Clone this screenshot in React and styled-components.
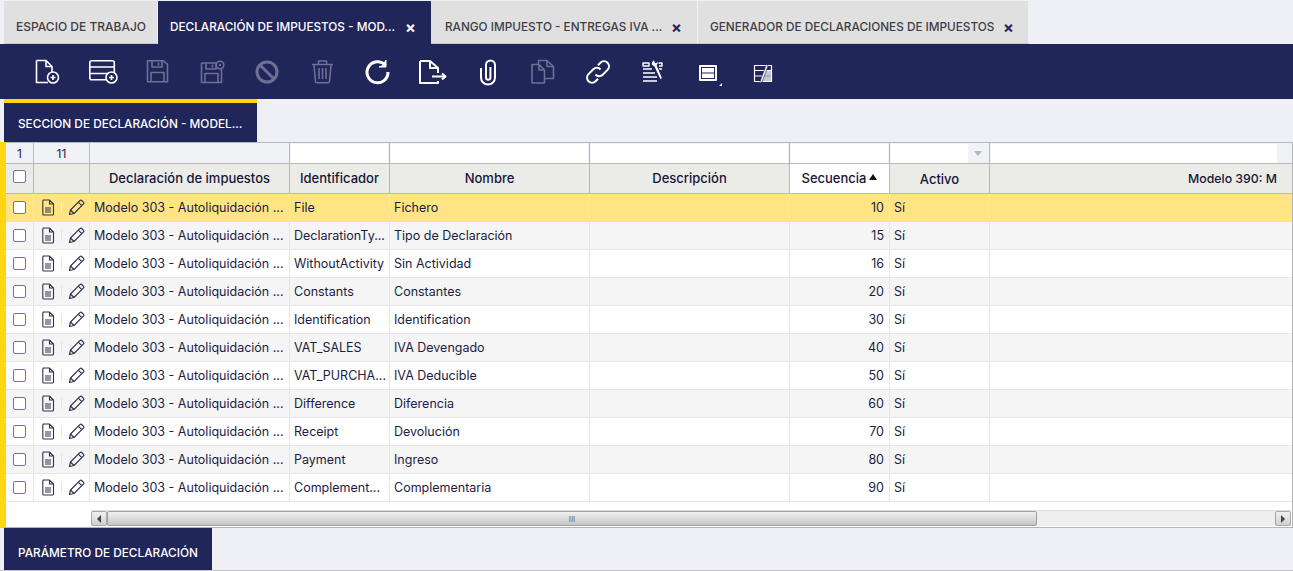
import styled, { createGlobalStyle } from "styled-components";

const NAVY = "#20255a";
const FONT = `Inter, "Liberation Sans", sans-serif`;
const COLUMNS = "28px 56px 200px 100px 200px 200px 100px 100px 1fr";

const GlobalStyle = createGlobalStyle`
  html, body {
    margin: 0;
    padding: 0;
    height: 100%;
    overflow: hidden;
    background: #eff0f5;
  }
  * { box-sizing: border-box; }
`;

const Page = styled.div`
  width: 1293px;
  height: 571px;
  overflow: hidden;
  display: flex;
  flex-direction: column;
  font-family: ${FONT};
  border-bottom: 1px solid #c4c4c4;
`;

const TabBar = styled.div`
  display: flex;
  height: 44px;
  padding: 1px 0 0 4px;
`;

const Tab = styled.div`
  width: ${(p) => p.$width}px;
  display: flex;
  align-items: center;
  padding: 9px 0 0 ${(p) => p.$pad || 12}px;
  font-size: ${(p) => p.$size || 11.75}px;
  font-weight: 500;
  white-space: nowrap;
  background: ${(p) => (p.$active ? NAVY : "#e0e0e0")};
  color: ${(p) => (p.$active ? "#fff" : "#3e3e48")};
  border-bottom: 1px solid ${(p) => (p.$active ? NAVY : "#c8c8cc")};
  border-right: 1px solid ${(p) => (p.$active ? NAVY : "#eff0f5")};
`;

const TabLabel = styled.span`
  width: ${(p) => p.$width}px;
  flex-shrink: 0;
`;

const TabClose = styled.span`
  font-size: 16px;
  font-weight: 700;
  line-height: 1;
  color: ${(p) => (p.$active ? "#fff" : "#2c1f5e")};
`;

const Toolbar = styled.div`
  display: flex;
  height: 55px;
  padding: 12px 0 0 19px;
  background: ${NAVY};
`;

const ToolButton = styled.button`
  width: 55px;
  height: 32px;
  padding: 0 0 0 12px;
  border: 0;
  background: none;
  display: flex;
  color: ${(p) => (p.disabled ? "#6d7093" : "#fff")};
`;

const SectionTab = styled.div`
  width: ${(p) => p.$width}px;
  height: ${(p) => p.$height}px;
  margin-left: 4px;
  flex-shrink: 0;
  display: flex;
  align-items: center;
  padding: ${(p) => p.$top}px 0 0 14px;
  background: ${NAVY};
  color: #fff;
  font-size: 11.8px;
  font-weight: 500;
  white-space: nowrap;
  border-top: ${(p) => (p.$accent ? "4px solid #ffd60f" : "0")};
`;

const Panel = styled.div`
  height: 386px;
  flex-shrink: 0;
  border-left: 6px solid #ffd60f;
  border-right: 1px solid #b4b4b4;
  border-bottom: 1px solid #b4b4b4;
  background: #fff;
  display: flex;
  flex-direction: column;
`;

const Row = styled.div`
  display: grid;
  grid-template-columns: ${COLUMNS};
`;

const FilterRow = styled(Row)`
  height: 22px;
  background: #f1f2f5;
  border-top: 1px solid #b9b9b9;
  border-bottom: 1px solid #b9b9b9;
`;

const FilterCell = styled.div`
  display: flex;
  justify-content: center;
  align-items: center;
  padding: ${(p) => (p.$input ? "1px 1px 0 1px" : "1px 0 0 0")};
  border-right: 1px solid #b9b9b9;
  font-size: 12px;
  color: #25254a;
`;

const FilterInput = styled.div`
  flex: 1;
  height: 100%;
  background: #fff;
`;

const OpenFilter = styled(FilterCell)`
  justify-content: flex-start;
  padding: 1px 0 0 1px;
`;

const FilterSelect = styled.div`
  width: 77px;
  height: 100%;
  background: #fff;
`;

const FilterCaret = styled.span`
  margin-left: 6px;
  width: 0;
  height: 0;
  border-left: 4px solid transparent;
  border-right: 4px solid transparent;
  border-top: 5px solid #b8b8b8;
`;

const LastFilter = styled(FilterCell)`
  justify-content: flex-start;
  padding: 1px 15px 0 1px;
  border-right: 0;
`;

const HeaderRow = styled(Row)`
  height: 30px;
  background: #ebece8;
  border-bottom: 1px solid #b9b9b9;
`;

const HeaderCell = styled.div`
  display: flex;
  align-items: center;
  justify-content: ${(p) => p.$justify || "center"};
  padding: ${(p) => (p.$last ? "0 15px 1px 0" : "0 0 1px 0")};
  padding-top: ${(p) => (p.$low ? "2px" : "0")};
  background: ${(p) => (p.$sorted ? "#fff" : "transparent")};
  border-right: ${(p) => (p.$last ? "0" : "1px solid #b9b9b9")};
  font-size: ${(p) => (p.$last ? 12.3 : 13)}px;
  font-weight: 500;
  color: #16163a;
  white-space: nowrap;
`;

const SortMark = styled.span`
  margin: 0 0 3px 3px;
  width: 0;
  height: 0;
  border-left: 4px solid transparent;
  border-right: 4px solid transparent;
  border-bottom: 6px solid #111;
`;

const DataRow = styled(Row)`
  height: 28px;
  border-bottom: 1px solid ${(p) => (p.$selected ? "#ffe483" : "#e6e6e6")};
  background: ${(p) => (p.$selected ? "#ffe483" : p.$odd ? "#f5f5f5" : "#fff")};
`;

const Cell = styled.div`
  display: flex;
  align-items: center;
  justify-content: ${(p) => (p.$right ? "flex-end" : "flex-start")};
  padding: 0 4px;
  padding-right: ${(p) => (p.$right ? "5px" : "4px")};
  overflow: hidden;
  white-space: nowrap;
  border-right: ${(p) => (p.$last ? "0" : "1px solid #e6e6e6")};
  font-size: 12.5px;
  color: #1c1c44;
`;

const CheckCell = styled(Cell)`
  justify-content: center;
  padding: 0;
`;

const Check = styled.span`
  width: 13px;
  height: 13px;
  background: #fff;
  border: 1px solid #8167ad;
  border-radius: 2px;
`;

const HeaderCheck = styled(Check)`
  margin-bottom: 3px;
`;

const ActionCell = styled(Cell)`
  padding: 0 0 0 7px;
`;

const ActionDivider = styled.span`
  width: 1px;
  height: 11px;
  margin: 0 6px;
  background: ${(p) => (p.$selected ? "#fff3c4" : "#e4e4e4")};
`;

const Filler = styled.div`
  flex: 1;
`;

const ScrollBar = styled.div`
  height: 16px;
  margin: 0 1px 1px 85px;
  display: flex;
  background: #eeeeee;
  border-top: 1px solid #dedede;
`;

const ScrollEnd = styled.div`
  width: 16px;
  height: 15px;
  display: flex;
  align-items: center;
  justify-content: center;
  background: linear-gradient(#f2f2f2, #d0d0d0);
  border: 1px solid #a8a8a8;
  border-radius: 2px;
`;

const ScrollThumb = styled.div`
  width: 930px;
  height: 15px;
  display: flex;
  align-items: center;
  justify-content: center;
  background: linear-gradient(#f0f0f0, #c6c6c6);
  border: 1px solid #a0a0a0;
  border-radius: 2px;
  color: #666;
  font-size: 8px;
`;

const ScrollTrack = styled.div`
  flex: 1;
`;

const Arrow = styled.span`
  width: 0;
  height: 0;
  border-top: 4px solid transparent;
  border-bottom: 4px solid transparent;
  border-left: ${(p) => (p.$dir === "right" ? "4px solid #444" : "0")};
  border-right: ${(p) => (p.$dir === "left" ? "4px solid #444" : "0")};
`;

const Icon = ({ children, width = 2 }) => (
  <svg width="32" height="32" viewBox="0 0 32 32" fill="none" stroke="currentColor" strokeWidth={width} strokeLinejoin="round">
    {children}
  </svg>
);

const PlusBadge = ({ x, y }) => (
  <g>
    <circle cx={x} cy={y} r="5.5" fill={NAVY} />
    <path d={`M${x - 2.5} ${y}h5M${x} ${y - 2.5}v5`} />
  </g>
);

const NewDocIcon = () => (
  <Icon width={1.6}>
    <path d="M5.5 4.5H15l6 6v7M15 4.5v6h6M17 26.5H5.5v-22" />
    <PlusBadge x={22} y={21.5} />
  </Icon>
);

const NewRowIcon = () => (
  <Icon width={1.6}>
    <rect x="3.8" y="4.8" width="24.5" height="19" rx="2" />
    <path d="M4 11h24M4 17.5h24" />
    <PlusBadge x={25.5} y={21.5} />
  </Icon>
);

const SaveIcon = () => (
  <Icon width={1.6}>
    <path d="M6.5 4.8h16l4 3.5v17.5h-20z" />
    <path d="M11 5v6h10V5M17.5 6.5v3M10 25.5v-9h13v9" />
  </Icon>
);

const SaveCloseIcon = () => (
  <Icon width={1.6}>
    <g transform="translate(-1 0)">
      <path d="M6.5 7h15M26.5 13v13.5h-20V7" />
      <path d="M11 7v6h10V7M17.5 8.5v3M10 26.5v-9h13v9" />
      <circle cx="25" cy="9" r="3.8" />
      <path d="M24 8l2 2M26 8l-2 2" strokeWidth="1" />
    </g>
  </Icon>
);

const CancelIcon = () => (
  <Icon width={3}>
    <circle cx="16" cy="16" r="10" />
    <path d="M9 9l14 14" />
  </Icon>
);

const TrashIcon = () => (
  <Icon width={1.6}>
    <path d="M6 8.5h21M12.5 8V5h8v3M8 9l1.5 16.5c.1.8.6 1.3 1.4 1.3h11.2c.8 0 1.3-.5 1.4-1.3L25 9" />
    <path d="M13 12v11M16.5 12v11M20 12v11" />
  </Icon>
);

const RefreshIcon = () => (
  <Icon width={3}>
    <path d="M24.5 9.5A10.5 10.5 0 1 0 27 16" />
    <path d="M25 4v7h-7l4-1.5z" fill="currentColor" strokeWidth="1" />
  </Icon>
);

const ExportIcon = () => (
  <Icon width={2}>
    <path d="M4 5h10l8 7v5M14 5v7h8M22 25v2H4V5" />
    <path d="M16 20.5h13M26 17.5l3.5 3-3.5 3" />
  </Icon>
);

const ClipIcon = () => (
  <Icon width={2}>
    <path d="M10 12v9.5a7 7 0 0 0 14 0V9a4.5 4.5 0 0 0-9 0v12.5a2.2 2.2 0 0 0 4.4 0V11" />
  </Icon>
);

const CopyIcon = () => (
  <Icon width={1.6}>
    <path d="M12.5 8V4.5H21l6.5 6v12h-9M21 4.5v6h6.500" />
    <path d="M6 8.5h7l5.500 5.500v13H6zM13 8.500V14h5.500" />
  </Icon>
);

const LinkIcon = () => (
  <Icon width={2}>
    <g transform="translate(1 0)">
      <path d="M13.5 18.5a5 5 0 0 0 7.2.2l4.8-4.8a5 5 0 0 0-7.100-7.100l-2.400 2.400" />
      <path d="M18.5 13.5a5 5 0 0 0-7.2-.2l-4.8 4.8a5 5 0 0 0 7.100 7.100l2.400-2.400" />
    </g>
  </Icon>
);

const FieldsIcon = () => (
  <Icon width={1.4}>
    <path d="M7 7h6v3H7zM7 13h9M7 17h12M7 21h14M7 25h14" />
    <path d="M20 7h6v3h-3M20 13h6" />
    <path d="M15.5 6c-.6 2.2.5 4 2.5 4.5l6 13 2.5-1.2-5.5-13.300c1.200-1 1.500-2.500 1-3.800l-2 1.600-1-.5-.3-2.200c-1.100-.2-2.300.5-3 1.900z" fill="currentColor" stroke={NAVY} strokeWidth="1" />
  </Icon>
);

const FormViewIcon = () => (
  <Icon width={2}>
    <rect x="9" y="10" width="16" height="14" />
    <rect x="11" y="12" width="12" height="4.5" fill="currentColor" stroke="none" />
    <rect x="11" y="17.5" width="12" height="4.5" fill="currentColor" stroke="none" />
    <path d="M31 27v3h-3z" fill="currentColor" stroke="none" />
  </Icon>
);

const GridViewIcon = () => (
  <Icon width={1.2}>
    <rect x="8.5" y="9.5" width="17" height="16" />
    <path d="M8.5 14.5h17M8.5 20h17" />
    <path d="M18 15h7v4.5h-8zM16 20.5h9V25h-10z" fill="#c8c8d0" stroke="none" />
    <path d="M20.5 8l-7 19 2.5-1 6-16z" fill="currentColor" stroke={NAVY} strokeWidth=".6" />
  </Icon>
);

const RowDocIcon = () => (
  <svg width="14" height="17" viewBox="0 0 14 17" fill="none" stroke="#33334d" strokeWidth="1.1">
    <path d="M1.8 1h6.700l4 4v10a1 1 0 0 1-1 1H2.800a1 1 0 0 1-1-1V2a1 1 0 0 1 1-1zM8.500 1v4h4" />
    <path d="M4 9h6M4 11h6M4 13h6" />
  </svg>
);

const RowEditIcon = () => (
  <svg width="17" height="17" viewBox="0 0 17 17" fill="none" stroke="#33334d" strokeWidth="1.2" strokeLinejoin="round">
    <path d="M1.5 15.5l1-4.500L11.800 1.700a1.500 1.500 0 0 1 2.100 0l1.400 1.400a1.500 1.500 0 0 1 0 2.100L6 14.500z" />
    <path d="M10.300 3.200l3.500 3.500M2.500 11l3.500 3.500" />
  </svg>
);

const tools = [
  { icon: NewDocIcon },
  { icon: NewRowIcon },
  { icon: SaveIcon, off: true },
  { icon: SaveCloseIcon, off: true },
  { icon: CancelIcon, off: true },
  { icon: TrashIcon, off: true },
  { icon: RefreshIcon },
  { icon: ExportIcon },
  { icon: ClipIcon },
  { icon: CopyIcon, off: true },
  { icon: LinkIcon },
  { icon: FieldsIcon },
  { icon: FormViewIcon },
  { icon: GridViewIcon },
];

const rows = [
  ["File", "Fichero", 10],
  ["DeclarationTy...", "Tipo de Declaración", 15],
  ["WithoutActivity", "Sin Actividad", 16],
  ["Constants", "Constantes", 20],
  ["Identification", "Identification", 30],
  ["VAT_SALES", "IVA Devengado", 40],
  ["VAT_PURCHA...", "IVA Deducible", 50],
  ["Difference", "Diferencia", 60],
  ["Receipt", "Devolución", 70],
  ["Payment", "Ingreso", 80],
  ["Complement...", "Complementaria", 90],
];

const App = () => {
  return (
    <Page>
      <GlobalStyle />
      <TabBar>
        <Tab $width={154} $size={12}>ESPACIO DE TRABAJO</Tab>
        <Tab $width={273} $active>
          <TabLabel $width={235}>DECLARACIÓN DE IMPUESTOS - MOD...</TabLabel>
          <TabClose $active>×</TabClose>
        </Tab>
        <Tab $width={267} $pad={14}>
          <TabLabel $width={226}>RANGO IMPUESTO - ENTREGAS IVA ...</TabLabel>
          <TabClose>×</TabClose>
        </Tab>
        <Tab $width={331}>
          <TabLabel $width={293}>GENERADOR DE DECLARACIONES DE IMPUESTOS</TabLabel>
          <TabClose>×</TabClose>
        </Tab>
      </TabBar>
      <Toolbar>
        {tools.map(({ icon: ToolIcon, off }, i) => (
          <ToolButton key={i} disabled={off}>
            <ToolIcon />
          </ToolButton>
        ))}
      </Toolbar>
      <SectionTab $width={253} $height={43} $top={3} $accent>
        SECCION DE DECLARACIÓN - MODEL...
      </SectionTab>
      <Panel>
        <FilterRow>
          <FilterCell>1</FilterCell>
          <FilterCell>11</FilterCell>
          <FilterCell />
          <FilterCell $input><FilterInput /></FilterCell>
          <FilterCell $input><FilterInput /></FilterCell>
          <FilterCell $input><FilterInput /></FilterCell>
          <FilterCell $input><FilterInput /></FilterCell>
          <OpenFilter>
            <FilterSelect />
            <FilterCaret />
          </OpenFilter>
          <LastFilter $input><FilterInput /></LastFilter>
        </FilterRow>
        <HeaderRow>
          <HeaderCell><HeaderCheck /></HeaderCell>
          <HeaderCell />
          <HeaderCell>Declaración de impuestos</HeaderCell>
          <HeaderCell>Identificador</HeaderCell>
          <HeaderCell>Nombre</HeaderCell>
          <HeaderCell>Descripción</HeaderCell>
          <HeaderCell $sorted>Secuencia<SortMark /></HeaderCell>
          <HeaderCell $low>Activo</HeaderCell>
          <HeaderCell $last $justify="flex-end">Modelo 390: M</HeaderCell>
        </HeaderRow>
        {rows.map(([key, name, seq], i) => (
          <DataRow key={key} $selected={i === 0} $odd={i % 2 === 1}>
            <CheckCell><Check /></CheckCell>
            <ActionCell>
              <RowDocIcon />
              <ActionDivider $selected={i === 0} />
              <RowEditIcon />
            </ActionCell>
            <Cell>Modelo 303 - Autoliquidación ...</Cell>
            <Cell>{key}</Cell>
            <Cell>{name}</Cell>
            <Cell />
            <Cell $right>{seq}</Cell>
            <Cell>Sí</Cell>
            <Cell $last />
          </DataRow>
        ))}
        <Filler />
        <ScrollBar>
          <ScrollEnd><Arrow $dir="left" /></ScrollEnd>
          <ScrollThumb>III</ScrollThumb>
          <ScrollTrack />
          <ScrollEnd><Arrow $dir="right" /></ScrollEnd>
        </ScrollBar>
      </Panel>
      <SectionTab $width={208} $height={42} $top={8}>PARÁMETRO DE DECLARACIÓN</SectionTab>
    </Page>
  );
};

export default App;
